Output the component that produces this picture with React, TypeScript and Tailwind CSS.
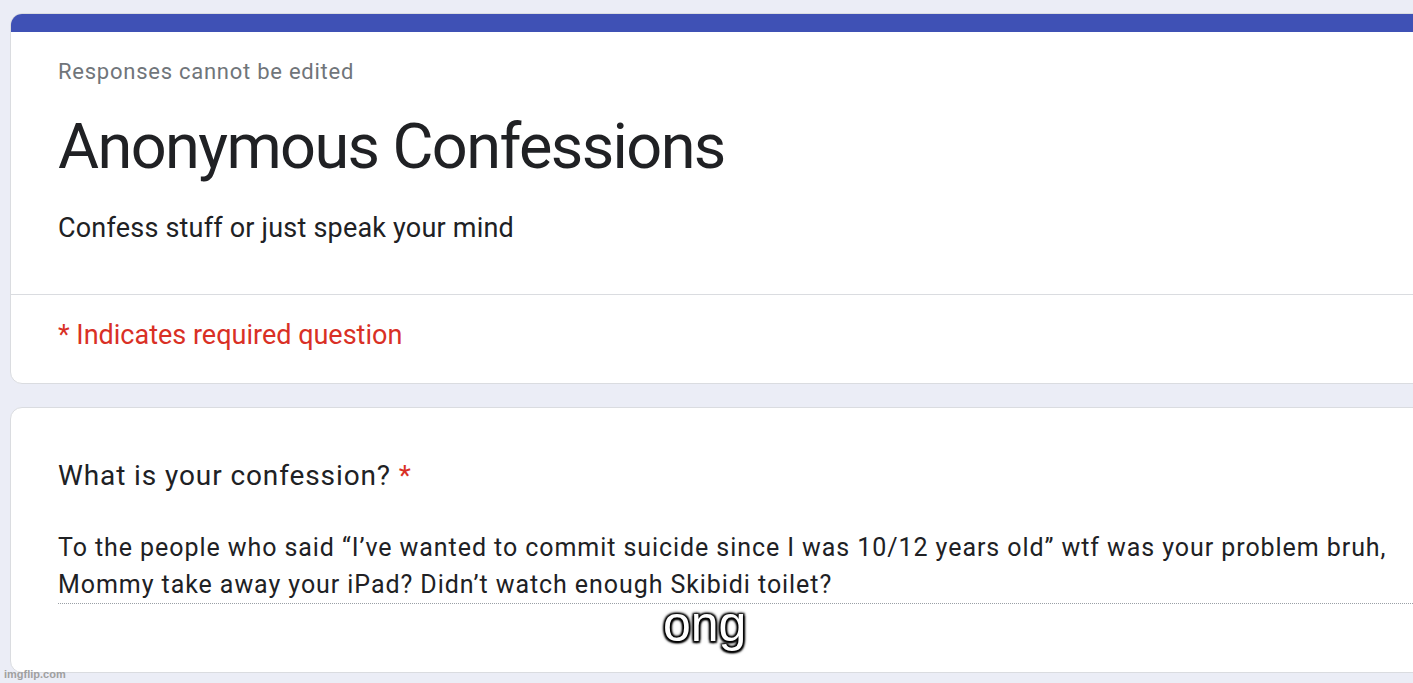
export default function App() {
  return (
    <div className="relative w-[1413px] h-[683px] overflow-hidden bg-[#ebedf6]" style={{ fontFamily: "Roboto, 'Liberation Sans', sans-serif" }}>
      <div className="pt-[13px] pl-[10px]">
        <div className="w-[1440px] bg-white border border-[#dadce0] rounded-[12px] overflow-hidden">
          <div className="h-[19px] bg-[#3f51b5] -mx-px -mt-px" />
          <div className="pl-[47px] pt-[26px] pb-[48px]">
            <div className="text-[22px] leading-[28px] tracking-[0.75px] text-[#70757a]">Responses cannot be edited</div>
            <div className="mt-[21px] text-[63px] leading-[80px] tracking-[-1.6px] text-[#202124]">Anonymous Confessions</div>
            <div className="mt-[23px] text-[27px] leading-[36px] tracking-[0.2px] text-[#202124]">Confess stuff or just speak your mind</div>
          </div>
          <div className="h-px bg-[#dadce0]" />
          <div className="pl-[47px] pt-[24px] pb-[32px]">
            <div className="text-[27px] leading-[32px] text-[#d93025]">* Indicates required question</div>
          </div>
        </div>
        <div className="mt-[23px] w-[1440px] bg-white border border-[#dadce0] rounded-[12px] pl-[47px] pt-[50px] pb-[68px]">
          <div className="text-[28px] leading-[36px] tracking-[0.9px] text-[#202124]">
            What is your confession? <span className="text-[#d93025]">*</span>
          </div>
          <div className="mt-[35px] text-[25px] leading-[37px] tracking-[0.93px] text-[#202124] border-b border-dotted border-[#9aa0a6] pr-[40px] whitespace-nowrap">
            To the people who said “I’ve wanted to commit suicide since I was 10/12 years old” wtf was your problem bruh,<br />
            Mommy take away your iPad? Didn’t watch enough Skibidi toilet?
          </div>
        </div>
      </div>
      <div
        className="absolute left-[663px] top-[596px] text-[50px] leading-[56px] text-white"
        style={{
          fontFamily: "'Liberation Sans', Arial, sans-serif",
          textShadow:
            "1.5px 1.5px 2px #000, -1.5px -1.5px 2px #000, 1.5px -1.5px 2px #000, -1.5px 1.5px 2px #000, 0 0 4px #000",
        }}
      >
        ong
      </div>
      <div
        className="absolute left-[4px] top-[667px] text-[11px] leading-[14px] font-bold text-[#a0a0a0]"
        style={{ fontFamily: "'Liberation Sans', Arial, sans-serif" }}
      >
        imgflip.com
      </div>
    </div>
  );
}
